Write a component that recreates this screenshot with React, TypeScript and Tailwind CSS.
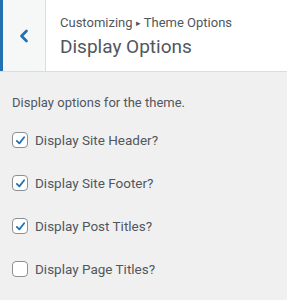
import { ChevronLeft } from "lucide-react";

const options = [
	{ label: "Display Site Header?", checked: true },
	{ label: "Display Site Footer?", checked: true },
	{ label: "Display Post Titles?", checked: true },
	{ label: "Display Page Titles?", checked: false },
];

function CheckBox({ checked }: { checked: boolean }) {
	return (
		<span className="w-4 h-4 shrink-0 rounded-[4px] border border-[#8c8f94] bg-white flex items-center justify-center">
			{checked && (
				<svg viewBox="0 0 16 16" className="w-[13px] h-[13px]">
					<path d="M3.5 8.5 L6.6 11.5 L12.5 4" fill="none" stroke="#2271b1" strokeWidth="2.2" strokeLinecap="round" strokeLinejoin="round" />
				</svg>
			)}
		</span>
	);
}

export default function App() {
	return (
		<div className="w-[287px] h-[300px] bg-[#f0f0f1] font-['Roboto',sans-serif] overflow-hidden">
			<header className="flex h-[72px] bg-white border-b border-[#dcdcde]">
				<div className="w-[46px] shrink-0 flex items-center justify-center bg-[#f6f7f7] border-l-[3px] border-[#2271b1] border-r border-r-[#dcdcde]">
					<ChevronLeft className="w-[20px] h-[20px] text-[#2271b1]" strokeWidth={3.2} />
				</div>
				<div className="flex flex-col pl-[14px] pt-[14px]">
					<span className="text-[13px] leading-[18px] text-[#50575e]">
						Customizing <span className="text-[9px] align-[1px]">▸</span> Theme Options
					</span>
					<h1 className="text-[19px] leading-[28px] text-[#50575e] mt-[1px]">Display Options</h1>
				</div>
			</header>
			<main className="px-3 pt-[22px]">
				<p className="text-[13px] leading-[18px] text-[#50575e]">Display options for the theme.</p>
				<ul className="flex flex-col gap-[25px] mt-[19px]">
					{options.map((opt) => (
						<li key={opt.label} className="flex items-center gap-[7px] h-[18px]">
							<CheckBox checked={opt.checked} />
							<span className="text-[13.5px] leading-[18px] text-[#50575e]">{opt.label}</span>
						</li>
					))}
				</ul>
			</main>
		</div>
	);
}
